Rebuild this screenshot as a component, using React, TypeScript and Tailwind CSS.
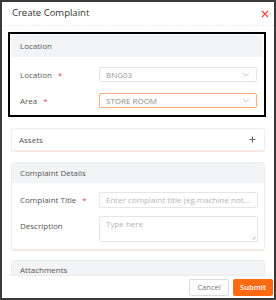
import React from "react";

const Chevron = () => (
  <svg width="8" height="5" viewBox="0 0 8 5" className="shrink-0">
    <path d="M1 1 L4 4 L7 1" fill="none" stroke="#c8c8c8" strokeWidth="0.9" />
  </svg>
);

const Req = () => <span className="text-[#e5484d] ml-[6px]">*</span>;

export default function App() {
  return (
    <div
      className="w-[276px] h-[300px] border-2 border-[#3a3a3a] bg-white flex flex-col overflow-hidden text-[#555]"
      style={{ fontFamily: '"Open Sans", "Noto Sans", sans-serif' }}
    >
      {/* Header */}
      <div className="h-[24px] shrink-0 flex items-center justify-between pl-[10px] pr-[5px] border-b border-dashed border-[#ececec]">
        <span className="text-[9.5px] text-[#333] -mt-[1px]">Create Complaint</span>
        <svg width="8" height="8" viewBox="0 0 8 8">
          <path d="M1 1 L7 7 M7 1 L1 7" stroke="#f0453a" strokeWidth="1.2" />
        </svg>
      </div>

      {/* Body */}
      <div className="flex-1 overflow-hidden px-[9px] pt-[6px] flex flex-col">
        {/* Location (highlighted) */}
        <div className="-ml-[3px] -mr-[1px] border-2 border-black p-[1px] shrink-0">
          <div className="h-[22px] bg-[#f3f4f6] flex items-center pl-[9px] text-[8px] text-[#555] rounded-t-[2px]">
            Location
          </div>
          <div className="pt-[10px] pb-[6px] flex flex-col gap-[11px] text-[8px]">
            <div className="flex items-center">
              <div className="w-[88px] pl-[9px] shrink-0">
                Location
                <Req />
              </div>
              <div className="flex-1 mr-[6px] h-[15px] border border-[#e6e6e6] rounded-[2px] flex items-center justify-between px-[6px] text-[#9a9a9a]">
                <span>BNG03</span>
                <Chevron />
              </div>
            </div>
            <div className="flex items-center">
              <div className="w-[88px] pl-[9px] shrink-0">
                Area
                <Req />
              </div>
              <div className="flex-1 mr-[6px] h-[15px] border border-[#ffac75] rounded-[2px] flex items-center justify-between px-[6px] text-[#8a8a8a]">
                <span>STORE ROOM</span>
                <Chevron />
              </div>
            </div>
          </div>
        </div>

        {/* Assets */}
        <div className="mt-[11px] h-[23px] shrink-0 border border-[#eeeeee] rounded-[3px] shadow-[0_1px_0_#fde5d6] flex items-center justify-between pl-[7px] pr-[8px] text-[8px]">
          <span>Assets</span>
          <svg width="7" height="7" viewBox="0 0 7 7">
            <path d="M3.5 0.5 V6.5 M0.5 3.5 H6.5" stroke="#555" strokeWidth="0.9" />
          </svg>
        </div>

        {/* Complaint Details */}
        <div className="mt-[11px] shrink-0 border border-[#eeeeee] rounded-[3px] shadow-[0_1px_0_#fde5d6] text-[8px]">
          <div className="h-[20px] bg-[#f3f4f6] flex items-center pl-[8px] rounded-t-[3px]">
            Complaint Details
          </div>
          <div className="pt-[9px] pb-[7px] flex flex-col gap-[8px]">
            <div className="flex items-center">
              <div className="w-[87px] pl-[8px] shrink-0">
                Complaint Title
                <Req />
              </div>
              <div className="flex-1 mr-[6px] h-[16px] border border-[#e6e6e6] rounded-[2px] flex items-center px-[6px] text-[#b5b5b5] overflow-hidden whitespace-nowrap">
                Enter complaint title (eg.machine not...
              </div>
            </div>
            <div className="flex items-start">
              <div className="w-[87px] pl-[8px] shrink-0 pt-[4px]">Description</div>
              <div className="relative flex-1 mr-[6px] h-[26px] border border-[#e6e6e6] rounded-[2px] px-[6px] pt-[1px] text-[#b5b5b5]">
                Type here
                <svg width="4" height="4" viewBox="0 0 4 4" className="absolute right-[1px] bottom-[1px]">
                  <path d="M0.5 3.5 L3.5 0.5 M2 3.5 L3.5 2" stroke="#999" strokeWidth="0.6" />
                </svg>
              </div>
            </div>
          </div>
        </div>

        {/* Attachments */}
        <div className="mt-[10px] shrink-0 border border-[#eeeeee] rounded-t-[3px] text-[8px]">
          <div className="h-[20px] bg-[#f3f4f6] flex items-start pl-[8px] pt-[3px]">Attachments</div>
        </div>
      </div>

      {/* Footer */}
      <div className="h-[22px] shrink-0 bg-white flex items-center justify-end gap-[4px] pr-[1px] pt-[1px] relative shadow-[0_-1px_2px_rgba(0,0,0,0.04)]">
        <div className="w-[40px] h-[17px] border border-[#dddddd] rounded-[2px] flex items-center justify-center text-[7.5px] text-[#777]">
          Cancel
        </div>
        <div className="w-[40px] h-[17px] bg-[#ff6a10] rounded-[2px] flex items-center justify-center text-[7.5px] font-semibold text-white">
          Submit
        </div>
      </div>
    </div>
  );
}
